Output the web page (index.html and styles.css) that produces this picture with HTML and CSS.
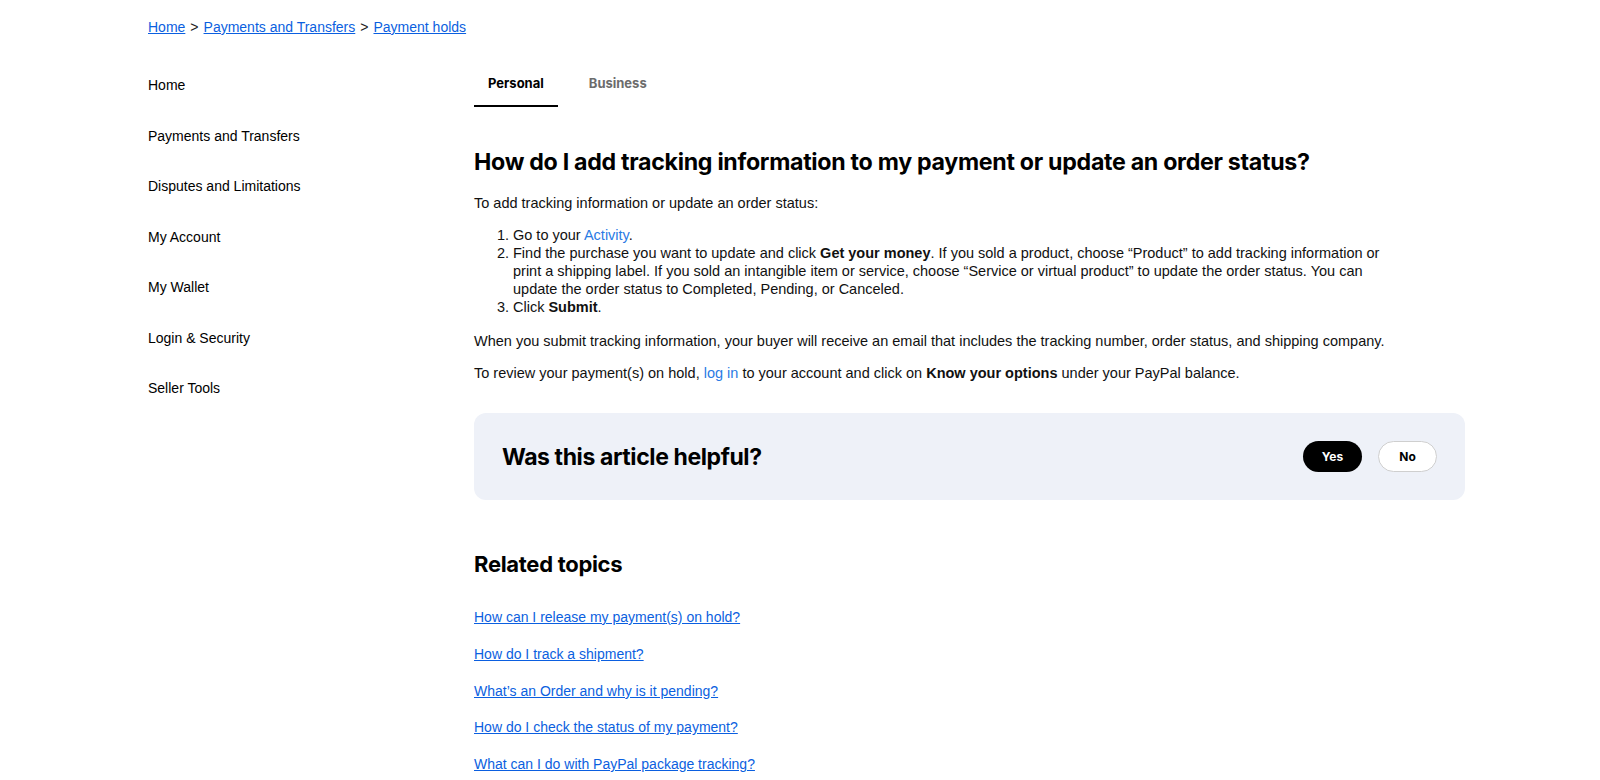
FILE: index.html
```html
<!DOCTYPE html>
<html lang="en">
<head>
    <meta charset="UTF-8">
    <title>Payment holds</title>
    <link rel="stylesheet" href="styles.css">
</head>
<body>
    <div class="page">
        <nav class="breadcrumb">
            <a href="#">Home</a>
            <span class="crumb-sep">&gt;</span>
            <a href="#">Payments and Transfers</a>
            <span class="crumb-sep">&gt;</span>
            <a href="#">Payment holds</a>
        </nav>

        <div class="layout">
            <aside class="side-nav">
                <a class="side-link" href="#">Home</a>
                <a class="side-link" href="#">Payments and Transfers</a>
                <a class="side-link" href="#">Disputes and Limitations</a>
                <a class="side-link" href="#">My Account</a>
                <a class="side-link" href="#">My Wallet</a>
                <a class="side-link" href="#">Login &amp; Security</a>
                <a class="side-link" href="#">Seller Tools</a>
            </aside>

            <main class="main">
                <div class="tabs">
                    <div class="tab active">Personal</div>
                    <div class="tab">Business</div>
                </div>

                <h1 class="article-title">How do I add tracking information to my payment or update an order status?</h1>

                <div class="article-body">
                    <p>To add tracking information or update an order status:</p>
                    <ol class="steps">
                        <li>Go to your <a class="inline-link" href="#">Activity</a>.</li>
                        <li>Find the purchase you want to update and click <strong>Get your money</strong>. If you sold a product, choose “Product” to add tracking information or print a shipping label. If you sold an intangible item or service, choose “Service or virtual product” to update the order status. You can update the order status to Completed, Pending, or Canceled.</li>
                        <li>Click <strong>Submit</strong>.</li>
                    </ol>
                    <p>When you submit tracking information, your buyer will receive an email that includes the tracking number, order status, and shipping company.</p>
                    <p>To review your payment(s) on hold, <a class="inline-link" href="#">log in</a> to your account and click on <strong>Know your options</strong> under your PayPal balance.</p>
                </div>

                <div class="helpful">
                    <div class="helpful-title">Was this article helpful?</div>
                    <div class="helpful-actions">
                        <button class="btn btn-yes">Yes</button>
                        <button class="btn btn-no">No</button>
                    </div>
                </div>

                <h2 class="related-title">Related topics</h2>
                <ul class="related-list">
                    <li><a href="#">How can I release my payment(s) on hold?</a></li>
                    <li><a href="#">How do I track a shipment?</a></li>
                    <li><a href="#">What’s an Order and why is it pending?</a></li>
                    <li><a href="#">How do I check the status of my payment?</a></li>
                    <li><a href="#">What can I do with PayPal package tracking?</a></li>
                </ul>
            </main>
        </div>
    </div>
</body>
</html>
```

FILE: styles.css
```css
* {
    margin: 0;
    padding: 0;
    box-sizing: border-box;
}

body {
    font-family: 'Liberation Sans', Arial, sans-serif;
    color: #000;
    background: #fff;
}

.page {
    padding: 17px 0 0 148px;
}

/* パンくず */
.breadcrumb {
    display: flex;
    align-items: center;
    gap: 5px;
    font-size: 14px;
    height: 20px;
}

.breadcrumb a {
    color: #0b5fe0;
    text-decoration: underline;
}

.crumb-sep {
    color: #222;
    font-size: 14px;
}

.layout {
    display: flex;
}

.side-nav {
    width: 326px;
    display: flex;
    flex-direction: column;
    padding-top: 40px;
    gap: 33.5px;
}

.side-link {
    font-size: 14px;
    color: #000;
    text-decoration: none;
    line-height: 17px;
}

.main {
    width: 991px;
    padding-top: 32px;
}

.tabs {
    display: flex;
    gap: 17px;
}

.tab {
    font-family: 'Inter', sans-serif;
    font-weight: 700;
    font-size: 13px;
    color: #6c6c6c;
    padding: 6px 14px 14px;
    border-bottom: 2px solid transparent;
}

.tab.active {
    color: #000;
    border-bottom-color: #000;
}

.article-title {
    font-family: 'Inter', sans-serif;
    font-size: 23.2px;
    font-weight: 700;
    letter-spacing: -0.3px;
    margin-top: 40px;
    line-height: 30px;
}

.article-body {
    font-size: 14.5px;
    line-height: 18px;
    margin-top: 17px;
    color: #111;
}

.article-body p {
    margin-bottom: 14.5px;
}

.article-body strong {
    font-weight: 700;
}

.steps {
    padding-left: 39px;
    margin-bottom: 16px;
    margin-top: -1px;
    width: 930px;
}

.inline-link {
    color: #2a7be4;
    text-decoration: none;
}

.helpful {
    margin-top: 31px;
    background: #eef1f8;
    border-radius: 12px;
    height: 87px;
    display: flex;
    align-items: center;
    justify-content: space-between;
    padding: 0 28px;
}

.helpful-title {
    font-family: 'Inter', sans-serif;
    font-size: 23px;
    font-weight: 700;
    letter-spacing: -0.4px;
}

.helpful-actions {
    display: flex;
    gap: 16px;
}

.btn {
    width: 59px;
    height: 31px;
    border-radius: 16px;
    font-family: 'Inter', sans-serif;
    font-weight: 700;
    font-size: 12px;
    cursor: pointer;
}

.btn-yes {
    background: #000;
    color: #fff;
    border: none;
}

.btn-no {
    background: #fff;
    color: #000;
    border: 1px solid #cfcfcf;
}

.related-title {
    font-family: 'Inter', sans-serif;
    font-size: 22px;
    font-weight: 700;
    letter-spacing: -0.3px;
    margin-top: 50px;
    line-height: 28px;
}

.related-list {
    list-style: none;
    margin-top: 30px;
    display: flex;
    flex-direction: column;
    gap: 18.25px;
}

.related-list a {
    color: #0b5fe0;
    font-size: 14px;
    line-height: 17.5px;
    text-decoration: underline;
}
```
